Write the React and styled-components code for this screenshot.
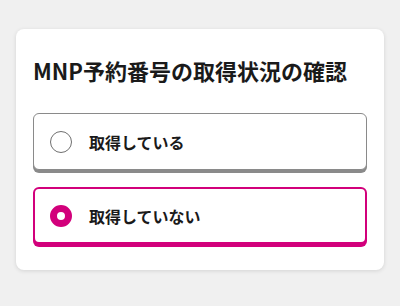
import React, { useState } from "react";
import styled, { createGlobalStyle } from "styled-components";

const Global = createGlobalStyle`
  html, body { margin: 0; padding: 0; background: #f0f0f0; }
  body { font-family: "Noto Sans CJK JP", "Noto Sans", sans-serif; color: #1a1a1a; }
`;

const Page = styled.div`
  padding: 29px 16px;
`;

const Card = styled.section`
  background: #fff;
  border-radius: 8px;
  box-shadow: 0 1px 4px rgba(0, 0, 0, 0.12);
  padding: 24px 17px 26px;
`;

const Title = styled.h2`
  margin: 0 0 26px;
  font-size: 22px;
  line-height: 34px;
  font-weight: 700;
  letter-spacing: 0;
  color: #1a1a1a;
`;

const Options = styled.div`
  display: flex;
  flex-direction: column;
  gap: 17px;
`;

const Option = styled.label`
  box-sizing: border-box;
  display: flex;
  align-items: center;
  gap: 17px;
  height: 57px;
  padding: 0 16px;
  border: ${(p) => (p.$selected ? "2px solid #d2007b" : "1px solid #8a8a8a")};
  padding-left: ${(p) => (p.$selected ? "15px" : "16px")};
  border-radius: 6px;
  box-shadow: 0 3px 0 0 ${(p) => (p.$selected ? "#d2007b" : "#8a8a8a")};
  background: #fff;
  cursor: pointer;
`;

const Radio = styled.span`
  box-sizing: border-box;
  width: 22px;
  height: 22px;
  border-radius: 50%;
  flex: none;
  background: #fff;
  border: ${(p) => (p.$selected ? "7px solid #d2007b" : "1px solid #6f6f6f")};
`;

const Label = styled.span`
  font-size: 16px;
  font-weight: 700;
  line-height: 22px;
  color: #1a1a1a;
`;

const choices = ["取得している", "取得していない"];

export default function App() {
  const [sel, setSel] = useState(1);
  return (
    <Page>
      <Global />
      <Card>
        <Title>MNP予約番号の取得状況の確認</Title>
        <Options>
          {choices.map((c, i) => (
            <Option key={c} $selected={sel === i} onClick={() => setSel(i)}>
              <Radio $selected={sel === i} />
              <Label>{c}</Label>
            </Option>
          ))}
        </Options>
      </Card>
    </Page>
  );
}
